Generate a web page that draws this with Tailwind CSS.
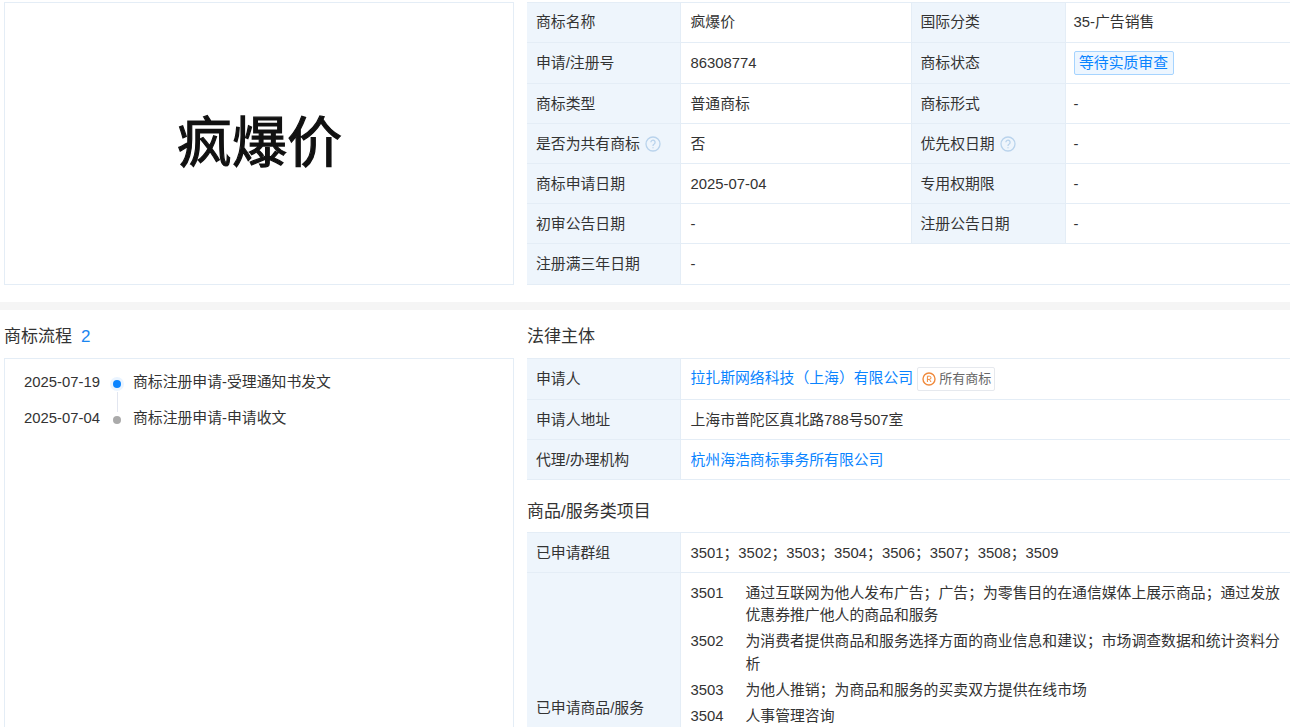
<!DOCTYPE html>
<html lang="zh-CN">
<head>
  <meta charset="UTF-8" />
  <title>疯爆价 商标详情</title>
  <script src="https://cdn.jsdelivr.net/npm/@tailwindcss/browser@4"></script>
</head>
<body class="h-screen overflow-hidden bg-white text-[14.85px] leading-[22px] text-[#333] font-['Liberation_Sans','Noto_Sans_CJK_SC',sans-serif]">

  <!-- Basic info -->
  <section class="flex h-[302px] pt-[2px] pl-[4px]">
    <div class="flex h-[283px] w-[510px] shrink-0 items-center justify-center border border-[#e4edf6] pl-[1px]">
      <span class="text-[55px] leading-none font-normal text-[#111] blur-[0.6px] [-webkit-text-stroke:1.2px_#111]">疯爆价</span>
    </div>
    <table class="ml-[13px] h-[282px] w-[900px] shrink-0 table-fixed border-collapse border-t border-[#e4edf6]">
      <colgroup>
        <col class="w-[153px]" /><col class="w-[231px]" /><col class="w-[154px]" /><col />
      </colgroup>
      <tbody>
        <tr class="h-[40px] border-b border-[#e4edf6]">
          <td class="border-r border-[#e4edf6] bg-[#eef5fc] pb-[2px] pl-[9px]">商标名称</td>
          <td class="border-r border-[#e4edf6] pb-[2px] pl-[10px]">疯爆价</td>
          <td class="border-r border-[#e4edf6] bg-[#eef5fc] pb-[2px] pl-[9px]">国际分类</td>
          <td class="pb-[2px] pl-[8px]">35-广告销售</td>
        </tr>
        <tr class="h-[41px] border-b border-[#e4edf6]">
          <td class="border-r border-[#e4edf6] bg-[#eef5fc] pb-[1px] pl-[9px]">申请/注册号</td>
          <td class="border-r border-[#e4edf6] pb-[1px] pl-[10px]">86308774</td>
          <td class="border-r border-[#e4edf6] bg-[#eef5fc] pb-[1px] pl-[9px]">商标状态</td>
          <td class="pb-[1px] pl-[8px]">
            <span class="inline-block h-[24px] rounded-[2px] border border-[#a6d4ff] bg-[#edf6ff] px-[4.5px] leading-[22px] text-[#0a84ff]">等待实质审查</span>
          </td>
        </tr>
        <tr class="h-[40px] border-b border-[#e4edf6]">
          <td class="border-r border-[#e4edf6] bg-[#eef5fc] pl-[9px]">商标类型</td>
          <td class="border-r border-[#e4edf6] pl-[10px]">普通商标</td>
          <td class="border-r border-[#e4edf6] bg-[#eef5fc] pl-[9px]">商标形式</td>
          <td class="pt-[1px] pl-[8px]">-</td>
        </tr>
        <tr class="h-[40px] border-b border-[#e4edf6]">
          <td class="border-r border-[#e4edf6] bg-[#eef5fc] pl-[9px]">
            <span class="flex items-center gap-[5px]">是否为共有商标
              <svg class="h-[16px] w-[16px] shrink-0" viewBox="0 0 16 16" fill="none" stroke="#b9d3ec" stroke-width="1.3"><circle cx="8" cy="8" r="7" /><path d="M5.9 6.3a2.1 2.1 0 1 1 3.3 1.7c-.8.5-1.2 1-1.2 1.9" /><path d="M8 11.2v1.1" /></svg>
            </span>
          </td>
          <td class="border-r border-[#e4edf6] pl-[10px]">否</td>
          <td class="border-r border-[#e4edf6] bg-[#eef5fc] pl-[9px]">
            <span class="flex items-center gap-[5px]">优先权日期
              <svg class="h-[16px] w-[16px] shrink-0" viewBox="0 0 16 16" fill="none" stroke="#b9d3ec" stroke-width="1.3"><circle cx="8" cy="8" r="7" /><path d="M5.9 6.3a2.1 2.1 0 1 1 3.3 1.7c-.8.5-1.2 1-1.2 1.9" /><path d="M8 11.2v1.1" /></svg>
            </span>
          </td>
          <td class="pt-[1px] pl-[8px]">-</td>
        </tr>
        <tr class="h-[40px] border-b border-[#e4edf6]">
          <td class="border-r border-[#e4edf6] bg-[#eef5fc] pl-[9px]">商标申请日期</td>
          <td class="border-r border-[#e4edf6] pl-[10px]">2025-07-04</td>
          <td class="border-r border-[#e4edf6] bg-[#eef5fc] pl-[9px]">专用权期限</td>
          <td class="pt-[1px] pl-[8px]">-</td>
        </tr>
        <tr class="h-[40px] border-b border-[#e4edf6]">
          <td class="border-r border-[#e4edf6] bg-[#eef5fc] pl-[9px]">初审公告日期</td>
          <td class="border-r border-[#e4edf6] pt-[1px] pl-[10px]">-</td>
          <td class="border-r border-[#e4edf6] bg-[#eef5fc] pl-[9px]">注册公告日期</td>
          <td class="pt-[1px] pl-[8px]">-</td>
        </tr>
        <tr class="h-[41px] border-b border-[#e4edf6]">
          <td class="border-r border-[#e4edf6] bg-[#eef5fc] pb-[1px] pl-[9px]">注册满三年日期</td>
          <td class="pl-[10px]" colspan="3">-</td>
        </tr>
      </tbody>
    </table>
  </section>

  <div class="h-[8px] bg-[#f5f5f5]"></div>

  <section class="flex pl-[4px]">
    <!-- Trademark process -->
    <div class="w-[510px] shrink-0">
      <h2 class="flex h-[48px] items-center pt-[6px] text-[17px] font-normal">商标流程<span class="ml-[9px] text-[#1a86f0]">2</span></h2>
      <div class="h-[500px] border border-[#e4edf6] pt-[12px] pl-[19px]">
        <div class="flex h-[36px]">
          <span class="w-[77px] shrink-0">2025-07-19</span>
          <div class="relative w-[32px] shrink-0">
            <span class="absolute top-[6px] left-[9px] h-[14px] w-[14px] rounded-full bg-[#eaf4ff]"></span>
            <span class="absolute top-[9px] left-[12px] h-[8px] w-[8px] rounded-full bg-[#0a84ff]"></span>
            <span class="absolute top-[21px] left-[16px] h-[20px] w-px bg-[#e2e6f0]"></span>
          </div>
          <span>商标注册申请-受理通知书发文</span>
        </div>
        <div class="flex h-[36px]">
          <span class="w-[77px] shrink-0">2025-07-04</span>
          <div class="relative w-[32px] shrink-0">
            <span class="absolute top-[9px] left-[12px] h-[8px] w-[8px] rounded-full bg-[#aaa]"></span>
          </div>
          <span>商标注册申请-申请收文</span>
        </div>
      </div>
    </div>

    <div class="ml-[13px] w-[900px] shrink-0">
      <!-- Legal entity -->
      <h2 class="flex h-[48px] items-center pt-[6px] text-[17px] font-normal">法律主体</h2>
      <table class="w-full table-fixed border-collapse border-t border-[#e4edf6]">
        <colgroup><col class="w-[153px]" /><col /></colgroup>
        <tbody>
          <tr class="h-[41px] border-b border-[#e4edf6]">
            <td class="border-r border-[#e4edf6] bg-[#eef5fc] pl-[9px]">申请人</td>
            <td class="pl-[10px]">
              <div class="flex items-center">
                <span class="pb-[3px] text-[#0a84ff]">拉扎斯网络科技（上海）有限公司</span>
                <span class="ml-[4px] flex h-[24px] items-center gap-[3px] rounded-[2px] border border-[#e6e9ee] pr-[3px] pl-[4px] text-[13px] text-[#666]">
                  <svg class="h-[14px] w-[14px] shrink-0" viewBox="0 0 14 14" fill="none" stroke="#f08a3c"><circle cx="7" cy="7" r="6" stroke-width="1.4" /><path d="M5.4 10V4.2h2a1.5 1.5 0 0 1 0 3.2h-2M7.4 7.4 9 10" /></svg>
                  所有商标
                </span>
              </div>
            </td>
          </tr>
          <tr class="h-[40px] border-b border-[#e4edf6]">
            <td class="border-r border-[#e4edf6] bg-[#eef5fc] pl-[9px]">申请人地址</td>
            <td class="pl-[10px]">上海市普陀区真北路788号507室</td>
          </tr>
          <tr class="h-[40px] border-b border-[#e4edf6]">
            <td class="border-r border-[#e4edf6] bg-[#eef5fc] pl-[9px]">代理/办理机构</td>
            <td class="pl-[10px] text-[#0a84ff]">杭州海浩商标事务所有限公司</td>
          </tr>
        </tbody>
      </table>

      <!-- Goods and services -->
      <h2 class="flex h-[52px] items-center pt-[12px] text-[17px] font-normal">商品/服务类项目</h2>
      <table class="w-full table-fixed border-collapse border-t border-[#e4edf6]">
        <colgroup><col class="w-[153px]" /><col /></colgroup>
        <tbody>
          <tr class="h-[40px] border-b border-[#e4edf6]">
            <td class="border-r border-[#e4edf6] bg-[#eef5fc] pl-[9px]">已申请群组</td>
            <td class="pl-[10px]">3501；3502；3503；3504；3506；3507；3508；3509</td>
          </tr>
          <tr class="h-[270px] border-b border-[#e4edf6]">
            <td class="border-r border-[#e4edf6] bg-[#eef5fc] pt-[1px] pl-[9px]">已申请商品/服务</td>
            <td class="pt-[8.5px] pl-[10px] align-top leading-[22.5px]">
              <div class="flex flex-col gap-[3.5px]">
                <div class="flex"><span class="w-[55px] shrink-0">3501</span><p class="w-[540px]">通过互联网为他人发布广告；广告；为零售目的在通信媒体上展示商品；通过发放优惠券推广他人的商品和服务</p></div>
                <div class="flex"><span class="w-[55px] shrink-0">3502</span><p class="w-[540px]">为消费者提供商品和服务选择方面的商业信息和建议；市场调查数据和统计资料分析</p></div>
                <div class="flex"><span class="w-[55px] shrink-0">3503</span><p class="w-[540px]">为他人推销；为商品和服务的买卖双方提供在线市场</p></div>
                <div class="flex"><span class="w-[55px] shrink-0">3504</span><p class="w-[540px]">人事管理咨询</p></div>
              </div>
            </td>
          </tr>
        </tbody>
      </table>
    </div>
  </section>
</body>
</html>
